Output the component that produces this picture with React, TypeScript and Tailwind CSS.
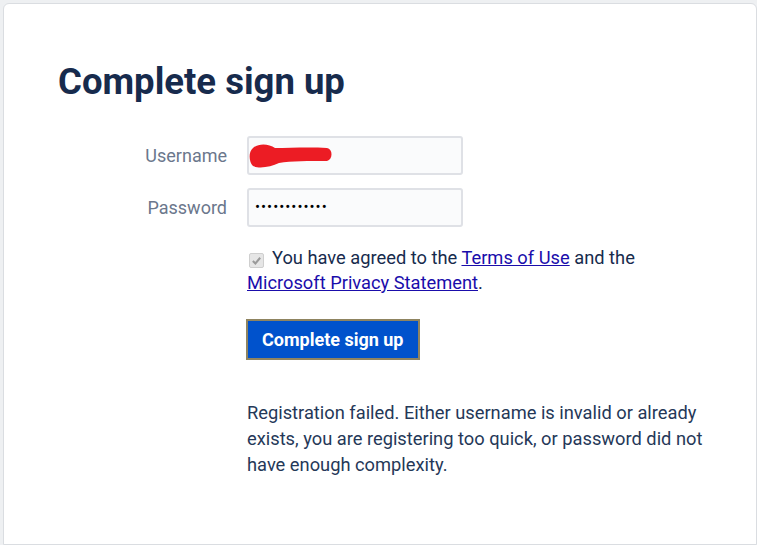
import React from 'react';

function Redaction() {
  return (
    <svg width="90" height="30" viewBox="0 0 90 30" className="absolute left-[-2px] top-[4px]">
      <path
        d="M6 6 C12 1 22 2 28 6 C42 6 62 5 80 6 C86 7 86 17 80 19 C62 19 44 19 32 21 C24 25 12 27 6 24 C2 20 1 10 6 6 Z"
        fill="#ec1c24"
      />
    </svg>
  );
}

function Field({ label, children }: { label: string; children: React.ReactNode }) {
  return (
    <div className="flex items-center gap-5">
      <label className="w-[169px] text-right text-[18px] text-[#6b778c]">{label}</label>
      <div className="relative h-[39px] w-[216px] rounded-[3px] border-2 border-[#dfe1e6] bg-[#fafbfc]">
        {children}
      </div>
    </div>
  );
}

export default function App() {
  return (
    <div
      className="min-h-[545px] bg-[#eef0f2] pl-[3px] pt-[3px] flex"
      style={{ fontFamily: 'Roboto, "Liberation Sans", sans-serif' }}
    >
      <div className="flex-1 min-h-[542px] rounded-t-[6px] border border-[#dadde1] bg-white pl-[54px] pt-[57px]">
        <h1 className="text-[36.5px] font-bold leading-[42px] text-[#172b4d]">Complete sign up</h1>

        <div className="mt-[33px] flex flex-col gap-[13px]">
          <Field label="Username">
            <Redaction />
          </Field>
          <Field label="Password">
            <span className="absolute left-[6px] top-[5px] text-[15px] tracking-[1px] text-black leading-[24px]">
              ••••••••••••
            </span>
          </Field>
        </div>

        <div className="ml-[189px] w-[462px]">
          <p className="mt-[18px] text-[18.3px] leading-[25px] text-[#172b4d]">
            <span className="mr-[8px] ml-[2px] inline-flex h-[15px] w-[15px] translate-y-[1px] items-center justify-center rounded-[2px] border border-[#cfcfcf] bg-[#e6e6e6] align-[-1px]">
              <svg width="11" height="11" viewBox="0 0 12 12">
                <path d="M2 6.5 L4.8 9.2 L10 3" fill="none" stroke="#9a9a9a" strokeWidth="2.2" />
              </svg>
            </span>
            You have agreed to the{' '}
            <a href="#" className="text-[#1a0dab] underline">Terms of Use</a> and the{' '}
            <a href="#" className="text-[#1a0dab] underline">Microsoft Privacy Statement</a>.
          </p>

          <button className="mt-[24px] h-[41px] -ml-[1px] border-2 border-[#8f8460] bg-[#0052cc] px-[14px] text-[18px] font-bold text-white">
            Complete sign up
          </button>

          <p className="mt-[40px] text-[18.3px] leading-[26px] text-[#253858]">
            Registration failed. Either username is invalid or already exists, you are registering too
            quick, or password did not have enough complexity.
          </p>
        </div>
      </div>
    </div>
  );
}
